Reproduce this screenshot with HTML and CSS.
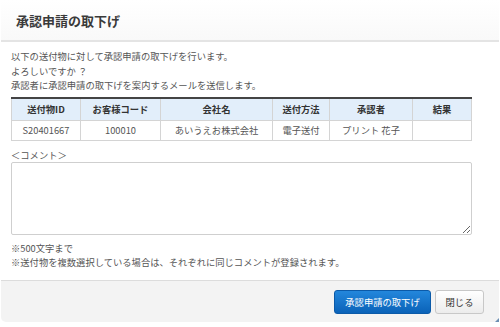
FILE: index.html
```html
<!DOCTYPE html>
<html lang="ja">
<head>
    <meta charset="UTF-8">
    <meta name="viewport" content="width=device-width, initial-scale=1.0">
    <title>承認申請の取下げ</title>
    <link rel="stylesheet" href="styles.css">
</head>
<body>

    <div class="dialog">
        <div class="dialog-header">
            <h1>承認申請の取下げ</h1>
        </div>

        <div class="dialog-body">
            <p class="message">
                以下の送付物に対して承認申請の取下げを行います。<br>
                よろしいですか ？<br>
                承認者に承認申請の取下げを案内するメールを送信します。
            </p>

            <table class="doc-table">
                <colgroup>
                    <col class="col-id">
                    <col class="col-code">
                    <col class="col-company">
                    <col class="col-method">
                    <col class="col-approver">
                    <col class="col-result">
                </colgroup>
                <thead>
                    <tr>
                        <th>送付物ID</th>
                        <th>お客様コード</th>
                        <th>会社名</th>
                        <th>送付方法</th>
                        <th>承認者</th>
                        <th>結果</th>
                    </tr>
                </thead>
                <tbody>
                    <tr>
                        <td>S20401667</td>
                        <td>100010</td>
                        <td>あいうえお株式会社</td>
                        <td>電子送付</td>
                        <td>プリント 花子</td>
                        <td></td>
                    </tr>
                </tbody>
            </table>

            <p class="label">＜コメント＞</p>
            <textarea class="comment"></textarea>

            <p class="note">
                ※500文字まで<br>
                ※送付物を複数選択している場合は、それぞれに同じコメントが登録されます。
            </p>
        </div>

        <div class="dialog-footer">
            <button class="btn btn-primary">承認申請の取下げ</button>
            <button class="btn btn-close">閉じる</button>
        </div>

        <svg class="grip" width="7" height="7" viewBox="0 0 7 7">
            <path d="M7 0 L7 7 L0 7 Z" fill="#6d8fb3"/>
        </svg>
    </div>

</body>
</html>
```

FILE: styles.css
```css
body {
    font-family: "Noto Sans CJK JP", "Liberation Sans", sans-serif;
    background-color: #ffffff;
    margin: 0;
    padding: 0;
    color: #555;
}

.dialog {
    position: relative;
    width: 498px;
    height: 322px;
    margin: 0 1px;
    display: flex;
    flex-direction: column;
}

.dialog-header {
    height: 40px;
    padding-left: 15px;
    display: flex;
    align-items: center;
    background: linear-gradient(#ffffff, #f9f9f9);
    border-bottom: 2px solid #e4e4e4;
}

.dialog-header h1 {
    margin: 0;
    font-size: 13px;
    font-weight: bold;
    color: #3a3a3a;
}

.dialog-body {
    flex: 1;
    padding: 7px 27px 0 10px;
}

.message {
    margin: 0;
    font-size: 9.3px;
    line-height: 14.5px;
}

.doc-table {
    width: 460px;
    margin-top: 4px;
    border-collapse: collapse;
    font-size: 9.3px;
    table-layout: fixed;
    border-top: 2px solid #444;
}

.doc-table th,
.doc-table td {
    border: 1px solid #d4d4d4;
    text-align: center;
    padding: 0;
    white-space: nowrap;
    overflow: hidden;
}

.doc-table th {
    height: 21px;
    background-color: #e2eefa;
    color: #333;
    font-weight: bold;
    border-top: none;
}

.doc-table td {
    height: 19px;
    color: #555;
}

.col-id { width: 69px; }
.col-code { width: 80px; }
.col-company { width: 112px; }
.col-method { width: 57px; }
.col-approver { width: 83px; }
.col-result { width: 59px; }

.label {
    margin: 7px 0 0 0;
    font-size: 9.3px;
    line-height: 14px;
}

.comment {
    display: block;
    box-sizing: border-box;
    width: 461px;
    height: 73px;
    margin-top: 0;
    border: 1px solid #cfcfcf;
    border-radius: 2px;
    resize: vertical;
}

.note {
    margin: 6px 0 0 0;
    font-size: 9.3px;
    line-height: 14.5px;
}

.dialog-footer {
    height: 41px;
    border-top: 1px solid #dcdcdc;
    background-color: #f3f3f3;
    border-radius: 0 0 5px 5px;
    display: flex;
    align-items: center;
    justify-content: flex-end;
    gap: 4px;
    padding-right: 15px;
}

.btn {
    height: 24px;
    font-family: "Noto Sans CJK JP", "Liberation Sans", sans-serif;
    font-size: 9.3px;
    border-radius: 3px;
    cursor: pointer;
    padding: 0;
}

.btn-primary {
    width: 97px;
    color: #fff;
    border: 1px solid #0b5aa8;
    background: linear-gradient(#2387dc, #0a62b8);
}

.btn-close {
    width: 49px;
    color: #333;
    border: 1px solid #c8c8c8;
    background: linear-gradient(#ffffff, #ececec);
}

.grip {
    position: absolute;
    right: 0;
    bottom: -3px;
}
```
